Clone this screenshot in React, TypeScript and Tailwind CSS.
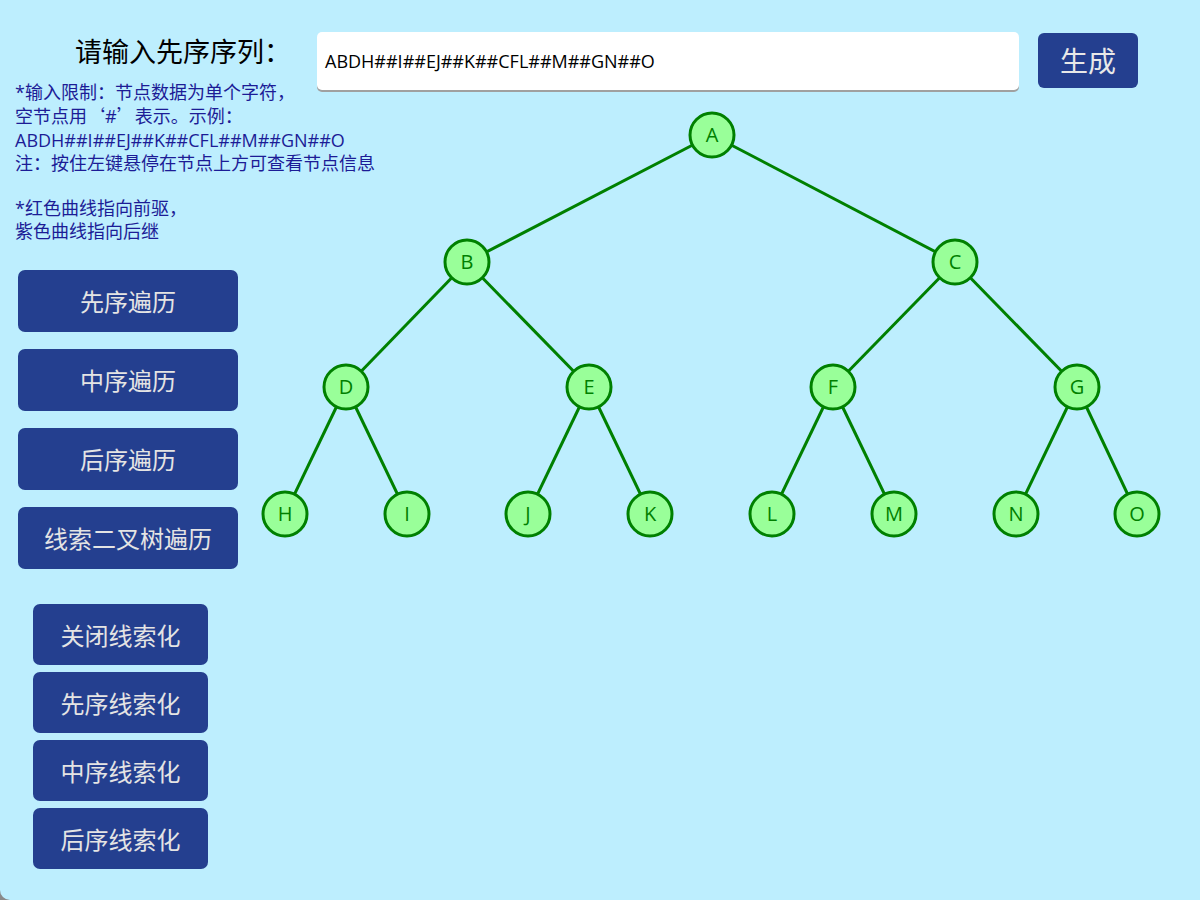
const font = "font-['Segoe_UI','Open_Sans','Noto_Sans_CJK_SC',sans-serif]";

type Node = { id: string; x: number; y: number };

// positions relative to the right column (which starts at x = 300)
const nodes: Node[] = [
  { id: "A", x: 412, y: 45 },
  { id: "B", x: 167, y: 172 },
  { id: "C", x: 655, y: 172 },
  { id: "D", x: 46, y: 297 },
  { id: "E", x: 289, y: 297 },
  { id: "F", x: 533, y: 297 },
  { id: "G", x: 777, y: 297 },
  { id: "H", x: -15, y: 424 },
  { id: "I", x: 107, y: 424 },
  { id: "J", x: 228, y: 424 },
  { id: "K", x: 350, y: 424 },
  { id: "L", x: 472, y: 424 },
  { id: "M", x: 594, y: 424 },
  { id: "N", x: 716, y: 424 },
  { id: "O", x: 837, y: 424 },
];

const edges: [string, string][] = [
  ["A", "B"], ["A", "C"],
  ["B", "D"], ["B", "E"], ["C", "F"], ["C", "G"],
  ["D", "H"], ["D", "I"], ["E", "J"], ["E", "K"],
  ["F", "L"], ["F", "M"], ["G", "N"], ["G", "O"],
];

const pos = (id: string) => nodes.find((n) => n.id === id)!;

function Tree() {
  return (
    <svg width="900" height="480" className="block overflow-visible">
      {edges.map(([a, b]) => {
        const p = pos(a);
        const q = pos(b);
        return (
          <line key={a + b} x1={p.x} y1={p.y} x2={q.x} y2={q.y} stroke="#008000" strokeWidth="3" />
        );
      })}
      {nodes.map((n) => (
        <g key={n.id}>
          <circle cx={n.x} cy={n.y} r="22" fill="#99ff99" stroke="#008000" strokeWidth="3" />
          <text
            x={n.x}
            y={n.y + 7}
            textAnchor="middle"
            fontSize="20"
            fill="#008000"
            fontFamily="'Segoe UI','Open Sans','Noto Sans',sans-serif"
          >
            {n.id}
          </text>
        </g>
      ))}
    </svg>
  );
}

const bigBtn =
  "w-[220px] h-[62px] pt-[2px] rounded-[7px] bg-[#243f8f] text-[#e4e4e4] text-[24px] flex items-center justify-center";
const smallBtn =
  "w-[175px] h-[61px] pt-[2px] rounded-[7px] bg-[#243f8f] text-[#e4e4e4] text-[24px] flex items-center justify-center";

export default function App() {
  return (
    <div className="w-[1200px] h-[900px] bg-[#8a8a8a]">
      <div className={`w-[1200px] h-[900px] bg-[#bdeefe] flex overflow-hidden rounded-bl-[10px] ${font}`}>
        <div className="w-[300px] shrink-0 flex flex-col">
          <div className="h-[36px] mt-[34px] pl-[75px] text-[27px] leading-[36px] text-black whitespace-nowrap">
            请输入先序序列：
          </div>
          <div className="mt-[11px] pl-[15px] text-[18px] leading-[23.4px] text-[#1c1c96] whitespace-nowrap">
            <p>*输入限制：节点数据为单个字符，</p>
            <p>
              空节点用<span className="font-['Noto_Sans_CJK_SC',sans-serif]">‘</span>#
              <span className="font-['Noto_Sans_CJK_SC',sans-serif]">’</span>表示。示例：
            </p>
            <p>ABDH##I##EJ##K##CFL##M##GN##O</p>
            <p>注：按住左键悬停在节点上方可查看节点信息</p>
            <p className="mt-[21px]">*红色曲线指向前驱，</p>
            <p>紫色曲线指向后继</p>
          </div>
          <div className="mt-[27px] pl-[18px] flex flex-col gap-[17px]">
            <button className={bigBtn}>先序遍历</button>
            <button className={bigBtn}>中序遍历</button>
            <button className={bigBtn}>后序遍历</button>
            <button className={bigBtn}>线索二叉树遍历</button>
          </div>
          <div className="mt-[35px] pl-[33px] flex flex-col gap-[7px]">
            <button className={smallBtn}>关闭线索化</button>
            <button className={smallBtn}>先序线索化</button>
            <button className={smallBtn}>中序线索化</button>
            <button className={smallBtn}>后序线索化</button>
          </div>
        </div>
        <div className="flex-1 flex flex-col">
          <div className="mt-[32px] pl-[17px] flex items-start gap-[19px]">
            <div className="w-[702px] h-[58px] bg-white rounded-[5px] shadow-[0_2px_0_#a0a0a0] flex items-center pl-[8px] text-[18px] text-black">
              ABDH##I##EJ##K##CFL##M##GN##O
            </div>
            <button className="mt-[1px] w-[100px] h-[55px] rounded-[6px] bg-[#243f8f] text-[#e8e8e8] text-[28px] flex items-center justify-center">
              生成
            </button>
          </div>
          <Tree />
        </div>
      </div>
    </div>
  );
}
